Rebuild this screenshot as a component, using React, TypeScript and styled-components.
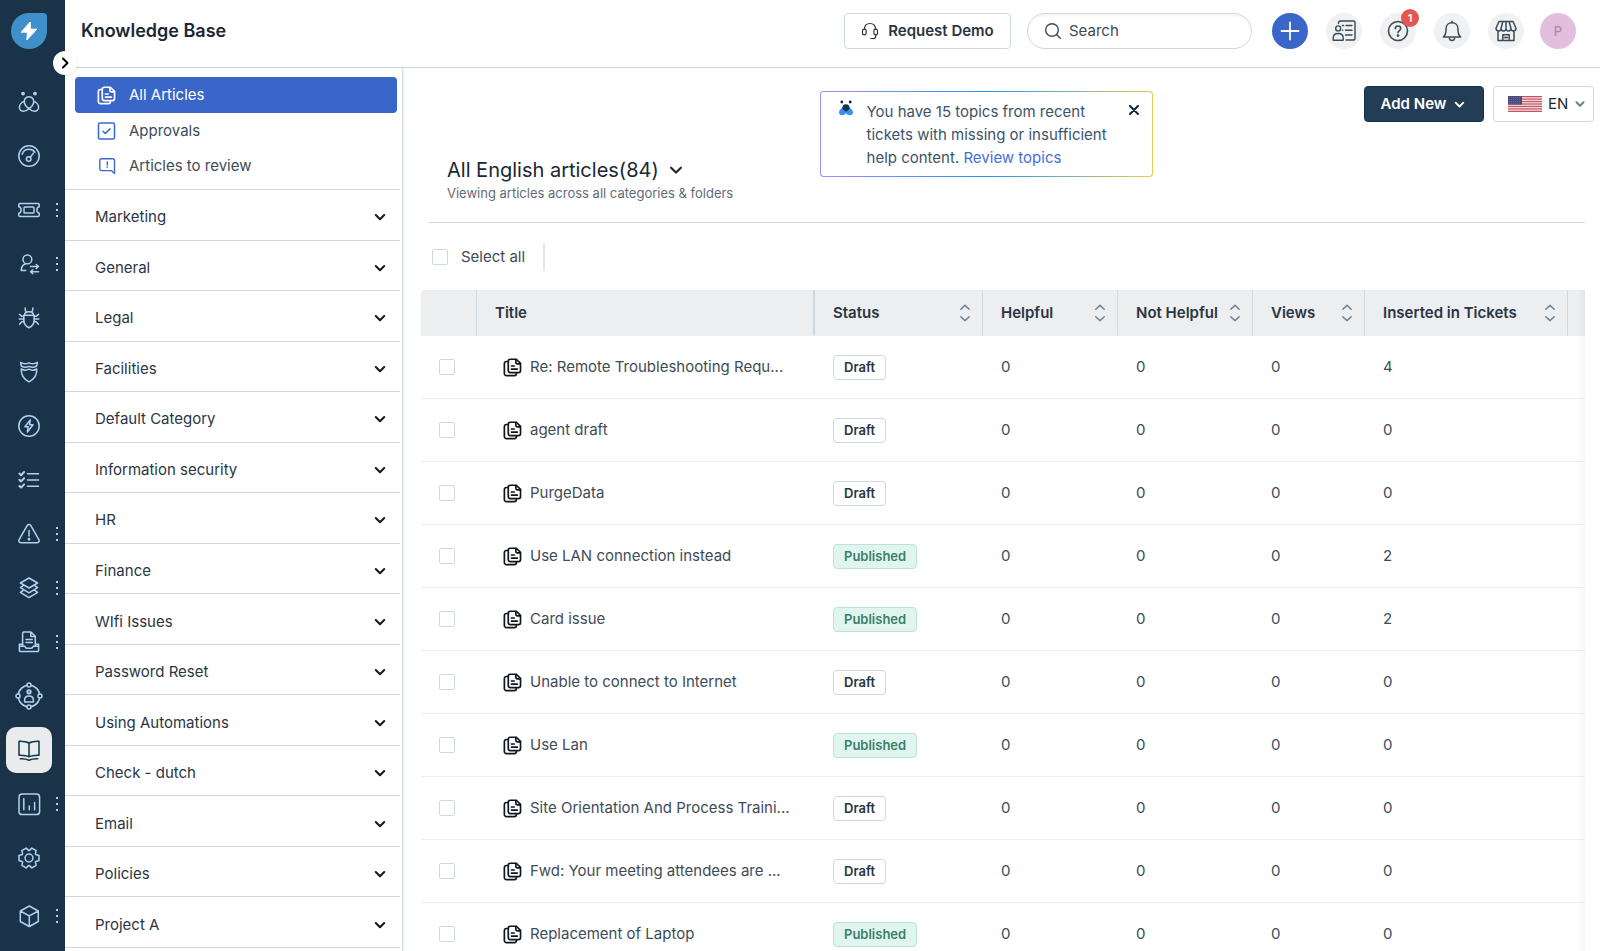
import React from "react";
import styled, { createGlobalStyle, css } from "styled-components";

const c = {
  rail: "#1a3349",
  railIcon: "#b2d0f0",
  ink: "#1b2733",
  text: "#414b57",
  line: "#cfd7df",
  softLine: "#ebeff3",
  blue: "#3966c8",
};

const Global = createGlobalStyle`
  *, *::before, *::after { box-sizing: border-box; }
  html, body, #root { height: 100%; }
  body {
    margin: 0;
    background: #fff;
    color: ${c.text};
    font-family: Inter, "Liberation Sans", sans-serif;
    font-size: 15px;
    line-height: 20px;
  }
  button, input, select { font: inherit; color: inherit; }
  h1, h2, p, ul { margin: 0; padding: 0; }
  ul { list-style: none; }
`;

/* ---------- icons ---------- */

const Svg = styled.svg`
  display: block;
  flex: none;
  fill: none;
  stroke: currentColor;
  stroke-linecap: round;
  stroke-linejoin: round;
`;

type IconProps = { size?: number; box?: number; weight?: number; children?: React.ReactNode };
const Icon = ({ size = 24, box = 24, weight = 1.5, children }: IconProps) => (
  <Svg width={size} height={size} viewBox={`0 0 ${box} ${box}`} strokeWidth={weight} aria-hidden="true">
    {children}
  </Svg>
);

const gearPoints = [0, 60, 120, 180, 240, 300]
  .flatMap((a) => [[-27, 7.6], [-14, 10.3], [14, 10.3], [27, 7.6]].map(([d, r]) => {
    const t = ((a + d) * Math.PI) / 180;
    return `${(12 + r * Math.cos(t)).toFixed(2)},${(12 + r * Math.sin(t)).toFixed(2)}`;
  }))
  .join(" ");

const glyphs: Record<string, React.ReactNode> = {
  bee: (
    <>
      <circle cx="6" cy="3.6" r="1.9" fill="currentColor" stroke="none" />
      <circle cx="18" cy="3.6" r="1.9" fill="currentColor" stroke="none" />
      <path d="M7.4 12.9C6.6 9.6 8.8 6.7 12 6.7s5.4 2.9 4.6 6.2c-.6 2.4-2.2 4.3-4.6 5.6-2.4-1.3-4-3.2-4.6-5.6z" />
      <path d="M7.3 11.6C4.6 12.2 2.4 14.6 2.4 17.3c0 2.3 1.8 4 4.2 4 2.2 0 4-1.3 5.4-2.8 1.4 1.5 3.2 2.8 5.4 2.8 2.4 0 4.2-1.7 4.2-4 0-2.7-2.2-5.1-4.9-5.7" />
    </>
  ),
  gauge: (
    <>
      <circle cx="12" cy="12" r="10.2" />
      <path d="M5.2 10.2C6.2 7.2 8.8 5.3 12 5.3c2.4 0 4.6 1.1 5.9 2.9" />
      <circle cx="11.7" cy="15" r="2.3" />
      <path d="M13.2 13.2l3.3-4.1" />
    </>
  ),
  ticket: (
    <>
      <path d="M3 5.5h18a1.2 1.2 0 0 1 1.2 1.2v2.1c-1.6.4-2.3 1.7-2.3 3.2s.7 2.8 2.3 3.2v2.1a1.2 1.2 0 0 1-1.2 1.2H3a1.2 1.2 0 0 1-1.2-1.2v-2.1c1.600-.4 2.300-1.700 2.300-3.200s-.7-2.800-2.300-3.200V6.700A1.200 1.200 0 0 1 3 5.500z" />
      <rect x="7" y="8.900" width="10" height="6.200" rx=".8" />
    </>
  ),
  handover: (
    <>
      <circle cx="10.4" cy="7.4" r="4.4" />
      <path d="M9 11.8c-3.2.7-4.700 3-4.700 6.600h4.400" />
      <path d="M13.500 14.500h8M19.200 12.500l2.300 2-2.300 2M21.500 19.700h-8M15.800 17.700l-2.300 2 2.300 2" />
    </>
  ),
  bug: (
    <>
      <path d="M8.200 2v1.600c0 1 .6 1.900 1.300 2.400M15.800 2v1.600c0 1-.6 1.900-1.300 2.400M7.400 9.300C7.600 7 9.300 5.800 12 5.800s4.400 1.200 4.600 3.500zM6.800 9.300h10.400v4.700c0 3.600-2.200 6.400-5.200 7.800-3-1.400-5.200-4.200-5.200-7.800z" />
      <path d="M6.800 10.200H4.600L2.400 8.400M6.800 13H2.200M6.900 15.300l-2.400.6-1.900 2.300M17.200 10.200h2.200l2.200-1.800M17.200 13h4.600M17.100 15.300l2.400.6 1.900 2.300" />
    </>
  ),
  shield: (
    <>
      <path d="M3.600 2.400c2.900 1.700 5.800 1.700 8.400.4 2.600 1.300 5.500 1.300 8.400-.4l-.7 3.600c-2.600 1.700-5.100 1.700-7.700.4-2.600 1.300-5.100 1.300-7.700-.4z" />
      <path d="M4.200 9c2.600 1.500 5.200 1.500 7.800.2 2.600 1.300 5.200 1.300 7.800-.2.200 5.700-2.500 10.200-7.800 12.800C6.700 19.200 4 14.700 4.200 9z" />
    </>
  ),
  bolt: (
    <>
      <circle cx="12" cy="12" r="10.200" />
      <path d="M13.300 6l-5.400 6.800h3.300L10.400 18l5.600-7.200h-3.500z" />
    </>
  ),
  checklist: (
    <>
      <path d="M10.500 5.800h11M10.500 12h11M10.500 18.200h11" />
      <path d="M2.400 5.600l1.700 1.600 3-3.200M2.400 11.800l1.700 1.600 3-3.200M2.400 18l1.700 1.600 3-3.200" strokeWidth="2" />
    </>
  ),
  warning: (
    <>
      <path d="M10.300 3.400a2 2 0 0 1 3.400 0l8.200 14.200c.8 1.500 0 3.100-1.700 3.100H3.800c-1.700 0-2.500-1.600-1.700-3.100z" />
      <path d="M12 8.500v5.500" />
      <circle cx="12" cy="17.200" r=".7" fill="currentColor" />
    </>
  ),
  layers: (
    <path d="M12 2l8.600 5L12 12 3.400 7zM6.200 9.700L3.400 11.600 12 16.800l8.600-5.200-2.800-1.900M6.200 14.400l-2.800 1.900L12 21.600l8.600-5.300-2.800-1.900" />
  ),
  inbox: (
    <>
      <path d="M5.600 16V3.400c0-.8.500-1.300 1.200-1.300H14l4.300 4.200V16M13.800 2.300v4.200h4.300M9 9.400h6.300M9 12.500h6.300" />
      <path d="M5.600 14.200H2.400v6.200c0 .7.500 1.200 1.200 1.200h16.800c.7 0 1.200-.5 1.200-1.200v-6.200h-3.200M2.600 16.300h5.200c.4 1.300 1.200 2 2.200 2h4c1 0 1.800-.7 2.200-2h5.200" />
    </>
  ),
  orbit: (
    <>
      <circle cx="14" cy="14" r="10.800" />
      <g fill={c.rail}>
        <circle cx="14" cy="3" r="2" />
        <circle cx="14" cy="25" r="2" />
        <circle cx="3" cy="14" r="2" />
        <circle cx="25" cy="14" r="2" />
      </g>
      <circle cx="14" cy="9.800" r="1.900" fill="currentColor" fillOpacity=".5" />
      <path d="M9.600 20v-1.600c0-2.600 1.800-4.300 4.400-4.300s4.400 1.700 4.400 4.300V20z" />
    </>
  ),
  book: (
    <>
      <path d="M12 5c-2.600-1.500-6-1.800-10-1.700v13.900c4-.1 7.400.1 10 1.600 2.600-1.500 6-1.700 10-1.600V3.300C18 3.200 14.600 3.500 12 5zM12 5v13.500" />
      <path d="M3.300 20.800c3-.2 6 .1 8.700 1.400 2.700-1.300 5.700-1.600 8.700-1.400" />
    </>
  ),
  chart: (
    <>
      <rect x="2" y="2" width="20.600" height="20.600" rx="3.200" />
      <path d="M6.800 6.800v11M12.300 14v3.800M17.600 10.500v7.300" />
    </>
  ),
  gear: (
    <>
      <polygon points={gearPoints} />
      <circle cx="12" cy="12" r="3.900" />
    </>
  ),
  cube: <path d="M12.300 2l9 5v10.500l-9 5-9-5V7zM3.300 7l9 4.900 9-4.900M12.300 11.900v10.600" />,
};

const ArticlesIcon = () => (
  <Icon size={19} box={18} weight={1.6}>
    <path d="M7 1.200h5.600l4 3.900v6.800a2 2 0 0 1-2 2H7a2 2 0 0 1-2-2V3.200a2 2 0 0 1 2-2z" />
    <path d="M4.800 3.300H3.300a2 2 0 0 0-2 2v9.400a2 2 0 0 0 2 2h7.400a2 2 0 0 0 2-2M12.200 1.400v2.900c0 .7.500 1.200 1.200 1.200h3M8 7.600h2.600M8 10.500h5.600" />
  </Icon>
);
const ApprovalIcon = () => (
  <Icon size={18} box={18}>
    <rect x="1" y="1" width="16" height="16" rx="1.600" />
    <path d="M5.500 9.200l2.300 2.300 4.700-4.600" />
  </Icon>
);
const ReviewIcon = () => (
  <Icon size={18} box={18} weight={1.4}>
    <path d="M17 16.500l-3.200-2.900H4.100a1.800 1.800 0 0 1-1.800-1.800V3.600a1.800 1.800 0 0 1 1.800-1.800h11.100a1.800 1.800 0 0 1 1.800 1.800zM9.700 5v3.200M9.700 10.200v.2" />
  </Icon>
);
const Chevron = ({ size = 12, weight = 2 }: { size?: number; weight?: number }) => (
  <Icon size={size} box={12} weight={weight}>
    <path d="M1.800 4l4.200 4.200L10.200 4" />
  </Icon>
);
const SortIcon = () => (
  <Svg width={12} height={18} viewBox="0 0 12 18" strokeWidth={1.5} aria-hidden="true">
    <path d="M1.800 5.200L6 1.400l4.200 3.800M1.800 12.800L6 16.600l4.200-3.800" />
  </Svg>
);

const Flag = () => (
  <svg width="34" height="16" viewBox="0 0 34 16" aria-hidden="true">
    <rect width="34" height="16" fill="#f3e4e6" />
    {[0, 1, 2, 3, 4, 5, 6].map((i) => (
      <rect key={i} y={i * 2.46} width="34" height="1.230" fill="#c4535f" />
    ))}
    <rect width="14" height="8.600" fill="#4d4b80" />
    {[1.5, 3.5, 5.5, 7.3].map((y) => (
      <path key={y} d={`M1 ${y}h12`} stroke="#9c9bbd" strokeWidth=".5" strokeDasharray=".7 1.3" />
    ))}
  </svg>
);

/* ---------- shell ---------- */

const Page = styled.div`
  display: flex;
  height: 100vh;
  overflow: hidden;
`;

const Rail = styled.nav`
  position: relative;
  z-index: 2;
  flex: none;
  display: flex;
  flex-direction: column;
  width: 65px;
  padding-top: 13px;
  background: ${c.rail};
  color: ${c.railIcon};
`;

const Logo = styled.a`
  display: grid;
  place-items: center;
  width: 36px;
  height: 36px;
  margin: 0 0 26px 11px;
  border-radius: 50% 4px 50% 50%;
  background: #3f8fcb;
`;

const Expand = styled.button`
  position: absolute;
  top: 51px;
  right: -12px;
  display: grid;
  place-items: center;
  width: 24px;
  height: 24px;
  padding: 0;
  border: 0;
  border-radius: 50%;
  background: #fff;
  color: #000;
  box-shadow: 0 1px 3px rgba(20, 40, 60, 0.12);
`;

const RailItem = styled.div<{ $last?: boolean }>`
  display: flex;
  align-items: center;
  height: 54px;
  padding-left: 6px;
  margin-top: ${(p) => (p.$last ? "4px" : "0")};
`;

const RailLink = styled.a<{ $active?: boolean }>`
  display: grid;
  place-items: center;
  width: 46px;
  height: 46px;
  border-radius: 10px;
  color: inherit;
  ${(p) => p.$active && css`
    background: #e9ebed;
    color: #12344d;
  `}
`;

const MoreDots = styled.button`
  display: grid;
  justify-items: center;
  gap: 4px;
  padding: 2px;
  margin-left: 2px;
  border: 0;
  background: none;
  &::before, &::after, span {
    content: "";
    width: 2px;
    height: 2px;
    background: ${c.railIcon};
  }
`;

const Workspace = styled.div`
  flex: 1;
  min-width: 0;
  display: flex;
  flex-direction: column;
`;

const TopBar = styled.header`
  flex: none;
  display: flex;
  align-items: center;
  height: 68px;
  padding: 0 24px 6px 16px;
  border-bottom: 1px solid ${c.line};
`;

const PageTitle = styled.h1`
  margin-right: auto;
  font-size: 18px;
  font-weight: 600;
  line-height: 24px;
  color: ${c.ink};
`;

const DemoButton = styled.button`
  display: flex;
  align-items: center;
  justify-content: center;
  gap: 9px;
  width: 167px;
  height: 36px;
  padding: 0;
  border: 1px solid ${c.line};
  border-radius: 4px;
  background: #fff;
  color: #2a3541;
  font-weight: 600;
  white-space: nowrap;
`;

const SearchBox = styled.label`
  display: flex;
  align-items: center;
  gap: 7px;
  width: 225px;
  height: 36px;
  margin: 0 20px 0 16px;
  padding: 0 16px;
  border: 1px solid ${c.line};
  border-radius: 18px;
  box-shadow: inset 0 2px 2px rgba(24, 50, 71, 0.05);
`;

const SearchInput = styled.input`
  flex: 1;
  min-width: 0;
  padding: 0;
  border: 0;
  outline: 0;
  background: none;
  &::placeholder { color: #414b57; opacity: 1; }
`;

const Actions = styled.div`
  display: flex;
  gap: 18px;
`;

const RoundButton = styled.button<{ $primary?: boolean }>`
  position: relative;
  display: grid;
  place-items: center;
  width: 36px;
  height: 36px;
  padding: 0;
  border: 0;
  border-radius: 50%;
  background: ${(p) => (p.$primary ? c.blue : "#eff1f3")};
  color: ${(p) => (p.$primary ? "#fff" : "#3c4a58")};
`;

const Badge = styled.span`
  position: absolute;
  top: -4px;
  right: -3px;
  width: 18px;
  height: 18px;
  border-radius: 50%;
  background: #e55650;
  color: #fff;
  font-size: 11px;
  font-weight: 600;
  line-height: 18px;
  text-align: center;
`;

const Avatar = styled.button`
  width: 36px;
  height: 36px;
  margin-left: 16px;
  padding: 0;
  border: 0;
  border-radius: 50%;
  background: #e3bfdd;
  color: #ad8aae;
  font-size: 13px;
  font-weight: 500;
`;

const Body = styled.div`
  flex: 1;
  min-height: 0;
  display: flex;
`;

/* ---------- category panel ---------- */

const Panel = styled.aside`
  flex: none;
  display: flex;
  flex-direction: column;
  width: 338px;
  padding: 9px 2px 3px 0;
  border-right: 1px solid #dbe1e7;
  box-shadow: 1px 0 2px rgba(24, 50, 71, 0.1);
`;

const Views = styled.ul`
  flex: none;
  display: flex;
  flex-direction: column;
  padding: 0 3px 6px 10px;
  height: 113px;
  border-bottom: 1px solid ${c.line};
`;

const ViewLink = styled.a<{ $active?: boolean }>`
  display: flex;
  align-items: center;
  gap: 13px;
  height: ${(p) => (p.$active ? "36px" : "35px")};
  padding-left: 22px;
  border-radius: 4px;
  text-decoration: none;
  background: ${(p) => (p.$active ? c.blue : "none")};
  color: ${(p) => (p.$active ? "#fff" : c.text)};
  svg { color: ${(p) => (p.$active ? "#fff" : "#3a6ad0")}; width: 19px; }
`;

const Categories = styled.ul`
  flex: 1;
  display: flex;
  flex-direction: column;
`;

const Category = styled.li`
  flex: 1 0 50px;
  display: flex;
  border-bottom: 1px solid ${c.line};
`;

const CategoryButton = styled.button`
  flex: 1;
  display: flex;
  align-items: center;
  justify-content: space-between;
  padding: 5px 14px 0 30px;
  border: 0;
  background: none;
  color: #2b3644;
  text-align: left;
  svg { color: #101820; }
`;

/* ---------- main ---------- */

const Main = styled.main`
  flex: 1;
  min-width: 0;
  overflow: hidden;
`;

const Hero = styled.div`
  display: grid;
  grid-template-columns: 373fr 333px 442fr;
  padding: 18px 6px 19px 44px;
`;

const Heading = styled.div`
  align-self: end;
`;

const HeadingButton = styled.button`
  display: flex;
  align-items: center;
  gap: 10px;
  padding: 0;
  border: 0;
  background: none;
  color: ${c.ink};
  h2 {
    font-size: 20px;
    font-weight: 400;
    line-height: 26px;
  }
`;

const SubHeading = styled.p`
  font-size: 13px;
  color: #5f6b78;
  white-space: nowrap;
`;

const Notice = styled.section`
  align-self: start;
  display: flex;
  align-items: flex-start;
  height: 86px;
  margin: 5px 0 26px;
  padding: 8px 9px 0 16px;
  border: 1px solid transparent;
  border-radius: 4px;
  background:
    linear-gradient(#fff, #fff) padding-box,
    linear-gradient(90deg, #a78bfa, #2196f3 50%, #e8cb4e) border-box;
  p {
    flex: 1;
    margin-left: 12px;
    line-height: 23px;
    color: #3d5368;
    white-space: nowrap;
  }
  a {
    color: #4470d6;
    text-decoration: none;
  }
`;

const CloseButton = styled.button`
  padding: 5px 4px;
  border: 0;
  background: none;
  color: #12263a;
`;

const HeroActions = styled.div`
  display: flex;
  justify-content: flex-end;
  align-items: flex-start;
  gap: 9px;
`;

const AddButton = styled.button`
  display: flex;
  align-items: center;
  justify-content: center;
  gap: 8px;
  width: 120px;
  height: 36px;
  padding: 0 2px 0 0;
  border: 1px solid #12344d;
  border-radius: 4px;
  background: #233d55;
  color: #fff;
  font-weight: 600;
`;

const LanguageBox = styled.label`
  display: flex;
  align-items: center;
  width: 101px;
  height: 36px;
  padding: 0 8px 0 14px;
  border: 1px solid ${c.line};
  border-radius: 4px;
  > svg:last-child { color: #6b7f93; }
`;

const LanguageSelect = styled.select`
  flex: 1;
  min-width: 0;
  padding: 0 0 0 6px;
  border: 0;
  outline: 0;
  appearance: none;
  background: none;
  color: #1c2733;
`;

const SelectBar = styled.div`
  display: flex;
  align-items: center;
  height: 68px;
  margin: 0 15px 0 26px;
  padding-left: 3px;
  border-top: 1px solid ${c.line};
`;

const SelectAll = styled.label`
  display: flex;
  align-items: center;
  gap: 13px;
  height: 28px;
  padding-right: 18px;
  border-right: 2px solid #e1e6eb;
`;

const Tick = styled.input`
  appearance: none;
  display: block;
  width: 16px;
  height: 16px;
  margin: 0;
  border: 1px solid ${c.line};
  border-radius: 2px;
  background: #fff;
`;

const TableWrap = styled.div`
  position: relative;
  margin: 0 15px 0 18px;
  &::after {
    content: "";
    position: absolute;
    inset: 0 0 0 auto;
    width: 8px;
    background: linear-gradient(90deg, rgba(24, 50, 71, 0), rgba(24, 50, 71, 0.04));
  }
`;

const Table = styled.table`
  width: 100%;
  table-layout: fixed;
  border-collapse: separate;
  border-spacing: 0;
`;

const Col = styled.col<{ $w?: number }>`
  width: ${(p) => (p.$w ? `${p.$w}px` : "auto")};
`;

const Th = styled.th<{ $edge?: "strong" | "none" }>`
  height: 46px;
  padding: 0 11px 0 18px;
  background: #eceef0;
  border-bottom: 1px solid ${c.softLine};
  border-right: ${(p) => (p.$edge === "none" ? "0" : p.$edge === "strong" ? "2px solid #cfd7df" : "1px solid #cfd7df")};
  color: #2a3541;
  font-weight: 600;
  text-align: left;
  white-space: nowrap;
  &:first-child { border-radius: 4px 0 0 0; }
`;

const HeadCell = styled.div`
  display: flex;
  align-items: center;
  justify-content: space-between;
  svg { color: #6f8296; }
`;

const Td = styled.td`
  height: 63px;
  padding: 0 18px;
  border-bottom: 1px solid ${c.softLine};
`;

const TitleLink = styled.a`
  display: flex;
  align-items: center;
  gap: 8px;
  padding-left: 8px;
  color: ${c.text};
  text-decoration: none;
  white-space: nowrap;
  svg { color: #10161d; }
`;

const Status = styled.span<{ $published: boolean }>`
  display: inline-block;
  padding: 0 10px;
  border: 1px solid ${(p) => (p.$published ? "#b9e5d6" : c.line)};
  border-radius: 4px;
  background: ${(p) => (p.$published ? "#e0f5ee" : "#fff")};
  color: ${(p) => (p.$published ? "#3b8068" : "#2a3541")};
  font-size: 13px;
  font-weight: 600;
  line-height: 23px;
`;

/* ---------- data ---------- */

const railItems: { icon: string; label: string; more?: boolean; active?: boolean }[] = [
  { icon: "bee", label: "Freddy" },
  { icon: "gauge", label: "Dashboard" },
  { icon: "ticket", label: "Tickets", more: true },
  { icon: "handover", label: "Onboarding", more: true },
  { icon: "bug", label: "Problems" },
  { icon: "shield", label: "Changes" },
  { icon: "bolt", label: "Releases" },
  { icon: "checklist", label: "Tasks" },
  { icon: "warning", label: "Alerts", more: true },
  { icon: "layers", label: "Assets", more: true },
  { icon: "inbox", label: "Documents", more: true },
  { icon: "orbit", label: "People" },
  { icon: "book", label: "Knowledge Base", active: true },
  { icon: "chart", label: "Analytics", more: true },
  { icon: "gear", label: "Admin" },
  { icon: "cube", label: "Apps", more: true },
];

const categories = [
  "Marketing", "General", "Legal", "Facilities", "Default Category", "Information security", "HR", "Finance",
  "WIfi Issues", "Password Reset", "Using Automations", "Check - dutch", "Email", "Policies", "Project A",
];

const columns: { label: string; width: number }[] = [
  { label: "Status", width: 168 },
  { label: "Helpful", width: 135 },
  { label: "Not Helpful", width: 135 },
  { label: "Views", width: 112 },
  { label: "Inserted in Tickets", width: 203 },
];

type Article = [title: string, status: "Draft" | "Published", inserted: number];
const articles: Article[] = [
  ["Re: Remote Troubleshooting Requ...", "Draft", 4],
  ["agent draft", "Draft", 0],
  ["PurgeData", "Draft", 0],
  ["Use LAN connection instead", "Published", 2],
  ["Card issue", "Published", 2],
  ["Unable to connect to Internet", "Draft", 0],
  ["Use Lan", "Published", 0],
  ["Site Orientation And Process Traini...", "Draft", 0],
  ["Fwd: Your meeting attendees are ...", "Draft", 0],
  ["Replacement of Laptop", "Published", 0],
];

/* ---------- page ---------- */

export default function App() {
  return (
    <>
      <Global />
      <Page>
        <Rail aria-label="Modules">
          <Logo href="#" aria-label="Home">
            <svg width="18" height="20" viewBox="0 0 18 20" aria-hidden="true">
              <path d="M10.2 1L1.2 11.2h6.2L6.8 19l10-10.800h-6.400z" fill="#fff" stroke="#fff" strokeLinejoin="round" />
            </svg>
          </Logo>
          <Expand aria-label="Expand navigation">
            <Icon size={12} box={12} weight={2}>
              <path d="M4 1.5L8.5 6 4 10.5" />
            </Icon>
          </Expand>
          {railItems.map((item) => (
            <RailItem key={item.icon} $last={item.icon === "cube"}>
              <RailLink href="#" aria-label={item.label} $active={item.active}>
                <Icon size={item.icon === "orbit" ? 28 : 24} box={item.icon === "orbit" ? 28 : 24}>
                  {glyphs[item.icon]}
                </Icon>
              </RailLink>
              {item.more && (
                <MoreDots aria-label={`More in ${item.label}`}>
                  <span />
                </MoreDots>
              )}
            </RailItem>
          ))}
        </Rail>

        <Workspace>
          <TopBar>
            <PageTitle>Knowledge Base</PageTitle>
            <DemoButton>
              <Icon size={18} box={18} weight={1.2}>
                <path d="M3.4 7.2C3.6 3.7 5.9 1.5 9 1.5s5.400 2.200 5.600 5.700" />
                <rect x="1.500" y="7.200" width="3.600" height="5.600" rx="1.600" />
                <rect x="12.900" y="7.200" width="3.600" height="5.600" rx="1.600" />
                <path d="M14.800 12.800v1.500c0 1.400-.9 2.200-2.300 2.200h-2.700" />
              </Icon>
              Request Demo
            </DemoButton>
            <SearchBox>
              <Icon size={18} box={18} weight={1.4}>
                <circle cx="8" cy="8" r="6.300" />
                <path d="M12.700 12.700l3.600 3.600" />
              </Icon>
              <SearchInput type="text" placeholder="Search" aria-label="Search" />
            </SearchBox>
            <Actions>
              <RoundButton $primary aria-label="Create">
                <Icon size={20} box={20} weight={1.8}>
                  <path d="M10 1.500v17M1.500 10h17" />
                </Icon>
              </RoundButton>
              <RoundButton aria-label="Directory">
                <Icon size={24} box={24} weight={1.4}>
                  <path d="M6.500 4.500V4a2 2 0 0 1 2-2h13a1.500 1.500 0 0 1 1.500 1.500v16a1.500 1.500 0 0 1-1.500 1.500H14M10.500 6.500h1M14 6.500h6M13.500 11.300h6.500M10.500 11.300h.3M13.500 16h6.500" />
                  <circle cx="6.200" cy="9.400" r="2.500" />
                  <path d="M1.200 21.200v-2c0-3 2-4.700 5-4.700s5 1.700 5 4.700v2z" />
                </Icon>
              </RoundButton>
              <RoundButton aria-label="Help, 1 update">
                <Icon size={22} box={22} weight={1.6}>
                  <circle cx="11" cy="11" r="9.500" />
                  <path d="M8.300 8.600C8.400 7 9.500 6 11 6s2.700 1 2.700 2.500c0 2.100-2.700 2.200-2.700 4.300" />
                  <circle cx="11" cy="15.600" r=".6" fill="currentColor" />
                </Icon>
                <Badge>1</Badge>
              </RoundButton>
              <RoundButton aria-label="Notifications">
                <Icon size={22} box={22}>
                  <path d="M11 1.200v1.600M2.400 17h17.200c-1.800-1.700-2.600-3.400-2.600-6V9c0-3.700-2.500-6.200-6-6.200S5 5.300 5 9v2c0 2.600-.8 4.300-2.600 6zM8.400 18.500c.3 1.300 1.300 2 2.600 2s2.300-.7 2.600-2" />
                </Icon>
              </RoundButton>
              <RoundButton aria-label="Marketplace">
                <Icon size={22} box={22}>
                  <path d="M4 1.500h14l3 6.800c0 1.700-1.100 2.700-2.600 2.700s-2.500-1-2.500-2.400C15.900 10 14.600 11 13.400 11S11 10 11 8.600C11 10 9.800 11 8.600 11S6.100 10 6.100 8.600C6.100 10 5.100 11 3.600 11S1 10 1 8.300zM7.800 1.700L6.100 8.300M11 1.700v6.600M14.200 1.700l1.700 6.600M3 11.200v9.300h16v-9.300" />
                  <path d="M7.800 20.300v-5.600h6.400v5.600M9.500 17.500h3" />
                </Icon>
              </RoundButton>
            </Actions>
            <Avatar aria-label="Profile">P</Avatar>
          </TopBar>

          <Body>
            <Panel>
              <Views>
                <li><ViewLink href="#" $active><ArticlesIcon />All Articles</ViewLink></li>
                <li><ViewLink href="#"><ApprovalIcon />Approvals</ViewLink></li>
                <li><ViewLink href="#"><ReviewIcon />Articles to review</ViewLink></li>
              </Views>
              <Categories>
                {categories.map((name) => (
                  <Category key={name}>
                    <CategoryButton>
                      {name}
                      <Chevron />
                    </CategoryButton>
                  </Category>
                ))}
              </Categories>
            </Panel>

            <Main>
              <Hero>
                <Heading>
                  <HeadingButton>
                    <h2>All English articles(84)</h2>
                    <Chevron size={14} weight={1.8} />
                  </HeadingButton>
                  <SubHeading>Viewing articles across all categories &amp; folders</SubHeading>
                </Heading>
                <Notice>
                  <svg width="18" height="18" viewBox="0 0 18 18" aria-hidden="true">
                    <circle cx="4.800" cy="2" r="1.400" fill="#12263a" />
                    <circle cx="13.200" cy="2" r="1.400" fill="#12263a" />
                    <path d="M7 7C4 8 2 10 2 12.300 2 14 3.300 15.300 5.200 15.300c1.800 0 3-.8 3.800-2 .8 1.200 2 2 3.800 2 1.900 0 3.200-1.300 3.200-3C16 10 14 8 11 7z" fill="#3492f5" />
                    <path d="M9 4.200c2.200 0 3.700 1.600 3.700 3.500 0 1.400-1.600 2.700-3.700 4.100-2.100-1.400-3.700-2.700-3.700-4.100 0-1.900 1.500-3.500 3.700-3.500z" fill="#12344d" />
                  </svg>
                  <p>
                    You have 15 topics from recent
                    <br />
                    tickets with missing or insufficient
                    <br />
                    help content. <a href="#">Review topics</a>
                  </p>
                  <CloseButton aria-label="Dismiss">
                    <Icon size={10} box={10} weight={2}>
                      <path d="M1 1l8 8M9 1L1 9" />
                    </Icon>
                  </CloseButton>
                </Notice>
                <HeroActions>
                  <AddButton>
                    Add New
                    <Chevron size={11} />
                  </AddButton>
                  <LanguageBox>
                    <Flag />
                    <LanguageSelect aria-label="Language" defaultValue="EN">
                      <option>EN</option>
                    </LanguageSelect>
                    <Chevron size={10} weight={2.5} />
                  </LanguageBox>
                </HeroActions>
              </Hero>

              <SelectBar>
                <SelectAll>
                  <Tick type="checkbox" />
                  Select all
                </SelectAll>
              </SelectBar>

              <TableWrap>
                <Table>
                  <colgroup>
                    <Col $w={56} />
                    <Col />
                    {columns.map((col) => (
                      <Col key={col.label} $w={col.width} />
                    ))}
                    <Col $w={17} />
                  </colgroup>
                  <thead>
                    <tr>
                      <Th aria-label="Selection" />
                      <Th $edge="strong">Title</Th>
                      {columns.map((col) => (
                        <Th key={col.label}>
                          <HeadCell>
                            {col.label}
                            <SortIcon />
                          </HeadCell>
                        </Th>
                      ))}
                      <Th $edge="none" aria-label="More columns" />
                    </tr>
                  </thead>
                  <tbody>
                    {articles.map(([title, status, inserted]) => (
                      <tr key={title}>
                        <Td><Tick type="checkbox" aria-label={`Select ${title}`} /></Td>
                        <Td><TitleLink href="#"><ArticlesIcon />{title}</TitleLink></Td>
                        <Td><Status $published={status === "Published"}>{status}</Status></Td>
                        <Td>0</Td>
                        <Td>0</Td>
                        <Td>0</Td>
                        <Td>{inserted}</Td>
                        <Td />
                      </tr>
                    ))}
                  </tbody>
                </Table>
              </TableWrap>
            </Main>
          </Body>
        </Workspace>
      </Page>
    </>
  );
}
